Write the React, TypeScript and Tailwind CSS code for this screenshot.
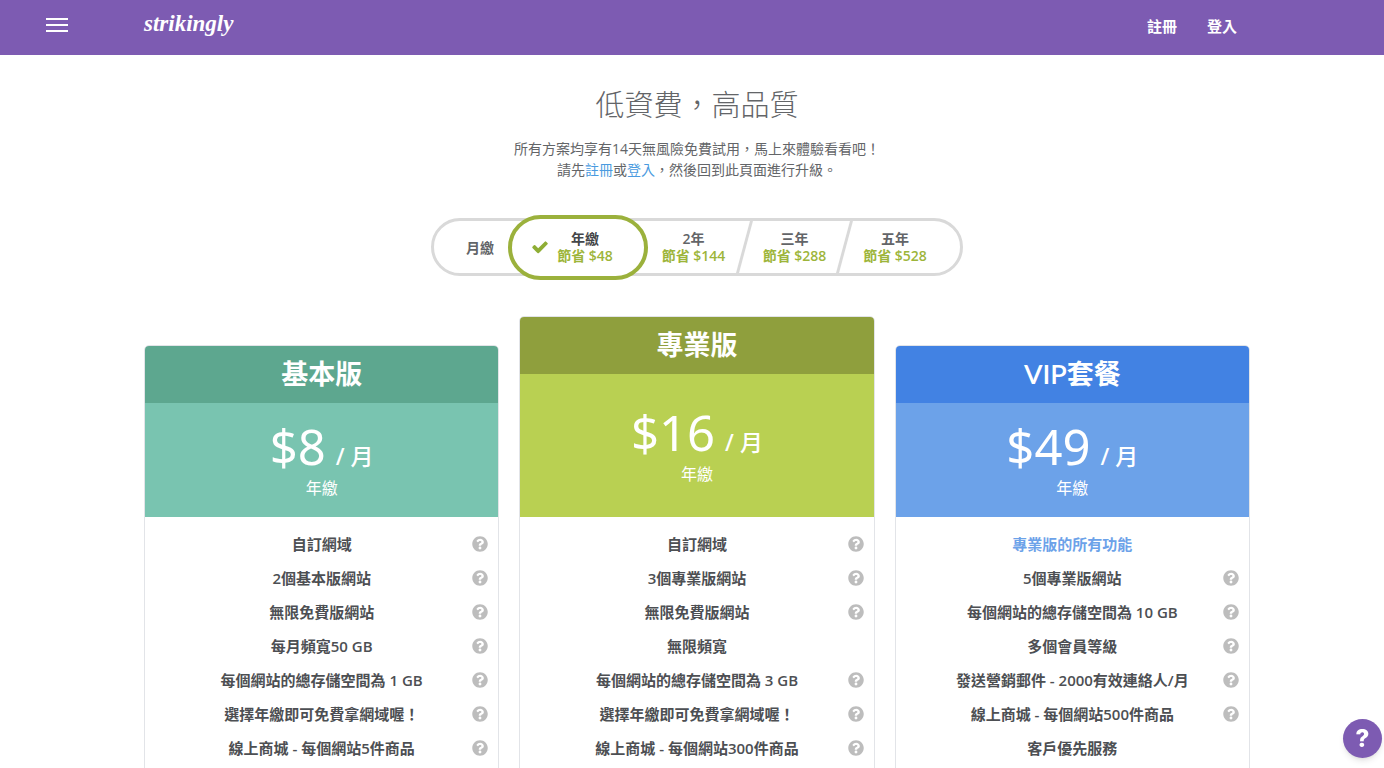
import React, { useState } from 'react';
import { FaQuestionCircle } from 'react-icons/fa';

interface Period {
  id: string;
  label: string;
  saving?: string;
  itemClass: string;
}

interface Feature {
  text: string;
  help?: boolean;
  highlight?: boolean;
}

interface Plan {
  id: string;
  prefix?: string;
  name: string;
  price: string;
  cardClass: string;
  titleClass: string;
  priceClass: string;
  features: Feature[];
}

const periods: Period[] = [
  { id: 'monthly', label: '月繳', itemClass: 'w-[74px] pl-[18px]' },
  { id: 'yearly', label: '年繳', saving: '節省 $48', itemClass: 'w-[140px]' },
  { id: 'two', label: '2年', saving: '節省 $144', itemClass: 'w-[95px] pr-1' },
  { id: 'three', label: '三年', saving: '節省 $288', itemClass: 'w-[97px]' },
  { id: 'five', label: '五年', saving: '節省 $528', itemClass: 'flex-1 pr-4' }
];

const plans: Plan[] = [
  {
    id: 'basic',
    name: '基本版',
    price: '$8',
    cardClass: 'mt-[29px]',
    titleClass: 'bg-[#5da78f]',
    priceClass: 'bg-[#79c4b0] h-[114px]',
    features: [
      { text: '自訂網域', help: true },
      { text: '2個基本版網站', help: true },
      { text: '無限免費版網站', help: true },
      { text: '每月頻寬50 GB', help: true },
      { text: '每個網站的總存儲空間為 1 GB', help: true },
      { text: '選擇年繳即可免費拿網域喔！', help: true },
      { text: '線上商城 - 每個網站5件商品', help: true }
    ]
  },
  {
    id: 'pro',
    name: '專業版',
    price: '$16',
    cardClass: '',
    titleClass: 'bg-[#8f9f3d]',
    priceClass: 'bg-[#b9d052] h-[143px]',
    features: [
      { text: '自訂網域', help: true },
      { text: '3個專業版網站', help: true },
      { text: '無限免費版網站', help: true },
      { text: '無限頻寬' },
      { text: '每個網站的總存儲空間為 3 GB', help: true },
      { text: '選擇年繳即可免費拿網域喔！', help: true },
      { text: '線上商城 - 每個網站300件商品', help: true }
    ]
  },
  {
    id: 'vip',
    prefix: 'VIP',
    name: '套餐',
    price: '$49',
    cardClass: 'mt-[29px]',
    titleClass: 'bg-[#4282e3]',
    priceClass: 'bg-[#6ca2e9] h-[114px]',
    features: [
      { text: '專業版的所有功能', highlight: true },
      { text: '5個專業版網站', help: true },
      { text: '每個網站的總存儲空間為 10 GB', help: true },
      { text: '多個會員等級', help: true },
      { text: '發送營銷郵件 - 2000有效連絡人/月', help: true },
      { text: '線上商城 - 每個網站500件商品', help: true },
      { text: '客戶優先服務' }
    ]
  }
];

const CheckIcon: React.FC = () => (
  <svg viewBox="0 0 1792 1792" className="size-[18px] fill-[#8fae35]" aria-hidden="true">
    <path d="M1671 566q0 40-28 68l-724 724-136 136q-28 28-68 28t-68-28l-136-136-362-362q-28-28-28-68t28-68l136-136q28-28 68-28t68 28l294 295 656-657q28-28 68-28t68 28l136 136q28 28 28 68z" />
  </svg>
);

const Header: React.FC = () => (
  <header className="h-[55px] bg-[#7d5bb2] text-white flex items-center pl-[46px] pr-[147px]">
    <button type="button" aria-label="選單" className="w-[98px] pb-[5px] cursor-pointer">
      <svg width="22" height="16" viewBox="0 0 22 16" stroke="currentColor" strokeWidth="2">
        <path d="M0 2h22M0 8h22M0 14h22" />
      </svg>
    </button>
    <a href="#" className="font-['Liberation_Serif',serif] font-bold italic text-[23px] leading-6 pb-2">strikingly</a>
    <nav className="ml-auto flex gap-[30px] pb-[2px] text-[15px] font-bold">
      <a href="#">註冊</a>
      <a href="#">登入</a>
    </nav>
  </header>
);

const PeriodPicker: React.FC = () => {
  const [selected, setSelected] = useState('yearly');

  return (
    <fieldset className="mt-[38px] flex justify-center">
      <div className="flex items-center h-[58px] w-[532px] rounded-full border-[3px] border-[#d9d9d9] text-sm leading-[17px] font-semibold">
        {periods.map((period, i) => {
          const active = period.id === selected;
          return (
            <React.Fragment key={period.id}>
              {i > 2 && <span className="h-full w-[3px] shrink-0 -skew-x-[15deg] bg-[#d9d9d9]" />}
              <label
                className={
                  active
                    ? 'flex items-center justify-center gap-2 h-[65px] w-[140px] pr-3 shrink-0 rounded-full border-4 border-[#9bb13c] bg-white cursor-pointer'
                    : `flex items-center justify-center h-full cursor-pointer ${period.itemClass}`
                }
              >
                <input
                  type="radio"
                  name="period"
                  className="sr-only"
                  checked={active}
                  onChange={() => setSelected(period.id)}
                />
                {active && <CheckIcon />}
                <span className="text-center whitespace-nowrap">
                  <span className={active ? 'block text-[#444649]' : 'block text-[#636568]'}>{period.label}</span>
                  {period.saving && <span className="block text-[#9db53a]">{period.saving}</span>}
                </span>
              </label>
            </React.Fragment>
          );
        })}
      </div>
    </fieldset>
  );
};

const PlanCard: React.FC<{ plan: Plan }> = ({ plan }) => (
  <section className={`rounded-t-[5px] border border-[#e2e4e8] overflow-hidden ${plan.cardClass}`}>
    <h2 className={`h-[57px] flex items-center justify-center text-white text-[27px] font-bold ${plan.titleClass}`}>
      {plan.prefix && <span className="font-['Lato',sans-serif] font-semibold">{plan.prefix}</span>}
      {plan.name}
    </h2>
    <div className={`flex flex-col items-center justify-center text-white ${plan.priceClass}`}>
      <p className="flex items-baseline gap-[10px] font-['Noto_Sans','Noto_Sans_CJK_TC',sans-serif]">
        <span className="text-[49px] leading-[56px]">{plan.price}</span>
        <span className="text-[23px] leading-6 font-medium">/ 月</span>
      </p>
      <p className="text-base leading-7">年繳</p>
    </div>
    <ul className="pt-[10px] pb-10 text-[15px] font-semibold text-[#4d4f53]">
      {plan.features.map(feature => (
        <li key={feature.text} className="h-[34px] px-[10px] grid grid-cols-[1fr_auto_1fr] items-center">
          <span />
          <span className={feature.highlight ? 'text-[#6ca2e9]' : ''}>{feature.text}</span>
          {feature.help && (
            <button type="button" aria-label={feature.text} className="justify-self-end cursor-pointer text-[#bdbdbd]">
              <FaQuestionCircle className="size-4" />
            </button>
          )}
        </li>
      ))}
    </ul>
  </section>
);

const App: React.FC = () => {
  return (
    <div lang="zh-Hant" className="min-h-screen bg-white font-['Open_Sans','Noto_Sans_CJK_TC',sans-serif]">
      <Header />
      <main className="pl-[144px] pr-[134px] pt-7">
        <div className="text-center text-[#636568]">
          <h1 className="text-[29px] leading-[44px] font-light">低資費，高品質</h1>
          <p className="mt-[11px] text-sm leading-[21px]">
            所有方案均享有14天無風險免費試用，馬上來體驗看看吧！
            <br />
            請先<a href="#" className="text-[#4a9be0]">註冊</a>或<a href="#" className="text-[#4a9be0]">登入</a>，然後回到此頁面進行升級。
          </p>
        </div>
        <PeriodPicker />
        <div className="mt-10 grid grid-cols-3 gap-5">
          {plans.map(plan => (
            <PlanCard key={plan.id} plan={plan} />
          ))}
        </div>
      </main>
      <button
        type="button"
        aria-label="幫助"
        className="fixed right-[2px] bottom-[10px] size-[39px] rounded-full bg-[#7d5bb2] text-white font-['Inter',sans-serif] font-extrabold text-2xl leading-none shadow-md cursor-pointer"
      >
        ?
      </button>
    </div>
  );
};

export default App;
